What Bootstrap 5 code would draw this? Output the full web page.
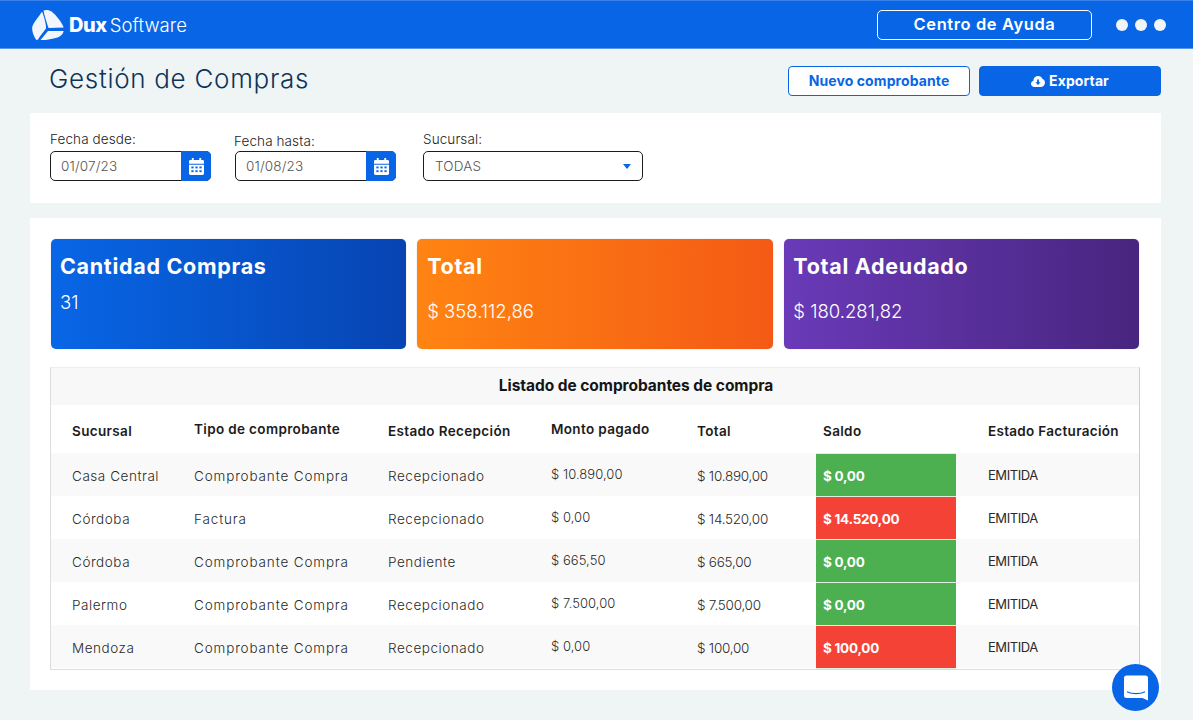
<!DOCTYPE html>
<html lang="es">
<head>
<meta charset="utf-8">
<title>Gestión de Compras</title>
<link href="https://cdn.jsdelivr.net/npm/bootstrap@5.3.0/dist/css/bootstrap.min.css" rel="stylesheet">
<style>
html,body{height:720px;overflow:hidden}
body{background:#eff5f5;font-family:Inter,"Open Sans",sans-serif;color:#1c1c1c;font-size:13.5px}
.topbar{height:49px;background:#0866e6;border-top:1px solid #3a83ea;border-bottom:1px solid #5a97ee;padding:0 27px 0 31px}
.brand{color:#fff;font-size:18.5px;gap:4px;line-height:1}
.brand b{font-weight:800;font-size:20px;letter-spacing:-.5px}
.brand span{font-weight:300;letter-spacing:.05px;margin-left:-2px}
.help-btn{width:215px;height:30px;border:1px solid #fff;border-radius:5px;color:#fff;font-weight:600;font-size:16.5px;letter-spacing:.6px;background:transparent;line-height:1;margin-right:24px;padding:0}
.dots{gap:7px}
.dots i{width:12px;height:12px;border-radius:50%;background:#f2f5f8;display:block}
.title-row{height:64px;padding:0 32px 0 49px}
.page-title{font-size:26px;font-weight:300;color:#0e3358;margin:0 0 4px;letter-spacing:.7px;line-height:1.2}
.btn-new,.btn-exp{height:30px;border-radius:4px;font-size:14px;font-weight:700;padding:0;line-height:1;letter-spacing:.1px}
.btn-new{width:182px;background:#fff;border:1px solid #0866e6;color:#0866e6;margin-right:9px}
.btn-exp{width:182px;background:#0866e6;border:1px solid #0866e6;color:#fff}
.sheet{background:#fff;margin:0 32px 0 30px}
.filters{height:90px;padding:17px 20px 0;margin-bottom:15px}
.fld-lbl{font-size:13.5px;line-height:18px;margin-bottom:3px;display:block;color:#1c1c1c;letter-spacing:.1px;font-weight:300}
.fld-lbl-low{margin-top:2px;margin-bottom:1px;margin-left:-1px}
.field-a{width:161px;margin-right:24px}
.field-b{width:161px;margin-right:27px}
.field-c{width:220px}
.dbox{height:30px;border:1px solid #1c1c1c;border-radius:5px;color:#555;font-size:13.5px;letter-spacing:.15px;font-weight:300;background:#fff}
.dbox>span{flex:1;padding-left:10px}
.dbox>span.sel-val{padding-left:11px}
.cal{width:30px;align-self:stretch;background:#0866e6;margin:-1px -1px -1px 0;border-radius:0 5px 5px 0}
.sel-arrow{width:0;height:0;border:4.5px solid transparent;border-top:5px solid #0866e6;border-bottom:0;margin-right:11px}
.sheet-main{height:472px;padding:21px 22px 0 21px}
.kpi-row{gap:11.5px;margin-bottom:18px}
.kpi{flex:1;height:110px;border-radius:5px;color:#fff;padding:14px 9px;box-shadow:0 0 1px rgba(0,0,0,.35)}
.kpi h5{font-size:21.5px;font-weight:700;margin:0;line-height:26px;letter-spacing:.7px}
.kpi p{margin:0;font-size:18.500px;font-weight:300;line-height:24px}
.kpi-a{background:linear-gradient(90deg,#0866e6 0%,#0744b2 100%)}
.kpi-a p{margin-top:11px}
.kpi-b{background:linear-gradient(90deg,#ff8412 0%,#f45a15 100%);padding-left:10px}
.kpi-c{background:linear-gradient(90deg,#6a3ab8 0%,#48257f 100%)}
.kpi-b p,.kpi-c p{margin-top:20px}
.grid-wrap{border:1px solid #ddd;border-right-color:#ccc;border-top:1px solid #eee;margin:0 0 0 -1px;width:1090px}
.grid-cap{height:37px;background:#f8f8f8;font-weight:700;font-size:15.5px;letter-spacing:-.05px;color:#151515;padding:0 0 2px 82px}
table.buy{table-layout:fixed;width:100%;margin:0;border-collapse:collapse}
table.buy th,table.buy td{padding:0 0 0 21px;vertical-align:middle;font-size:13.5px;white-space:nowrap;color:#2a2a2a;border:0}
table.buy th{height:48px;font-weight:600;color:#1c1c1c;padding-top:4px;letter-spacing:.35px}
table.buy td{height:43px;font-weight:300;letter-spacing:.55px;padding-top:3px}
table.buy td:nth-child(2){letter-spacing:.85px}
table.buy tbody tr:nth-child(odd) td{background:#f9f9f9}
table.buy th.up{padding-top:0}
table.buy td.up{padding-top:0;font-size:13px;letter-spacing:.05px}
table.buy td.tot{letter-spacing:-.25px}
table.buy td.sal{padding-left:7px;color:#fff;font-weight:700;letter-spacing:-.25px;border-top:1px solid #dfeedf;border-bottom:1px solid #dfeedf}
table.buy td.ok,table.buy tbody tr:nth-child(odd) td.ok{background:#4caf50}
table.buy td.bad,table.buy tbody tr:nth-child(odd) td.bad{background:#f44336}
table.buy td.fact{padding-left:32px;font-size:13px;letter-spacing:-.45px;font-weight:400}
table.buy th.fact{padding-left:32px;letter-spacing:.3px}
table.buy th.sal-h{padding-left:7px}
.chat{position:fixed;left:1112px;top:664px;width:47px;height:47px;border-radius:50%;background:#0866e6}
</style>
</head>
<body>
<header class="topbar d-flex align-items-center justify-content-between">
  <div class="brand d-flex align-items-center">
    <svg width="34" height="32" viewBox="0 0 34 32" fill="#f1f5fc" aria-hidden="true"><path d="M10.700 3 C8.500 7 2.500 13.500 1.200 18 C.7 22 3 28 5.500 31 C6.500 31.500 7.500 30 8.500 28 L15 19.500 C15.500 17 13.500 9 11.500 3.500 Z"/><path d="M12.500 1.500 C15 .5 18.500 1 20.500 2.500 C25 6 30 12 32.700 18.500 L17.500 19 C15.500 13 13.500 7 12.500 1.500 Z"/><path d="M9.500 31 L17 22 L32.700 22 C32 25 29.500 27.500 26.500 28.500 C21 30.300 14 31.300 9.500 31 Z"/></svg>
    <div><b>Dux</b> <span>Software</span></div>
  </div>
  <div class="d-flex align-items-center">
    <button class="help-btn" type="button">Centro de Ayuda</button>
    <div class="dots d-flex"><i></i><i></i><i></i></div>
  </div>
</header>

<div class="title-row d-flex align-items-center justify-content-between">
  <h1 class="page-title">Gestión de Compras</h1>
  <div class="d-flex align-items-center">
    <button class="btn-new" type="button">Nuevo comprobante</button>
    <button class="btn-exp d-flex align-items-center justify-content-center gap-1" type="button">
      <svg width="14" height="11" viewBox="0 0 14 11" aria-hidden="true"><path fill="#fff" d="M3.400 11C1.500 11 0 9.600 0 7.800 0 6.300 1 5.100 2.400 4.700 2.500 2.100 4.600 0 7.200 0c1.900 0 3.600 1.100 4.300 2.900C13 3.400 14 4.800 14 6.500 14 9 12 11 9.600 11Z"/><path fill="#0866e6" d="M6.100 3.500h1.800v2.700h1.700L7 9 4.400 6.200h1.700Z"/></svg>
      Exportar
    </button>
  </div>
</div>

<section class="sheet filters d-flex align-items-start">
  <div class="field-a">
    <label class="fld-lbl">Fecha desde:</label>
    <div class="dbox d-flex align-items-center"><span>01/07/23</span>
      <div class="cal d-flex align-items-center justify-content-center"><svg width="15" height="17" viewBox="0 0 16 18" aria-hidden="true"><use href="#calico"/></svg></div>
    </div>
  </div>
  <div class="field-b">
    <label class="fld-lbl fld-lbl-low">Fecha hasta:</label>
    <div class="dbox d-flex align-items-center"><span>01/08/23</span>
      <div class="cal d-flex align-items-center justify-content-center"><svg width="15" height="17" viewBox="0 0 16 18" aria-hidden="true"><use href="#calico"/></svg></div>
    </div>
  </div>
  <div class="field-c">
    <label class="fld-lbl">Sucursal:</label>
    <div class="dbox d-flex align-items-center"><span class="sel-val">TODAS</span><div class="sel-arrow"></div></div>
  </div>
</section>

<svg width="0" height="0" class="d-block" aria-hidden="true"><defs>
  <g id="calico"><path fill="#fff" d="M3 0h2v2h6V0h2v2h1.500A1.500 1.500 0 0 1 16 3.500V6H0V3.500A1.500 1.500 0 0 1 1.500 2H3Z"/><path fill="#fff" d="M0 7h16v9.500A1.500 1.500 0 0 1 14.500 18h-13A1.500 1.500 0 0 1 0 16.500Z"/>
  <g fill="#0866e6"><rect x="2.500" y="9" width="2.400" height="2"/><rect x="6.800" y="9" width="2.400" height="2"/><rect x="11.100" y="9" width="2.400" height="2"/><rect x="2.500" y="13" width="2.400" height="2"/><rect x="6.800" y="13" width="2.400" height="2"/><rect x="11.100" y="13" width="2.400" height="2"/></g></g>
</defs></svg>

<section class="sheet sheet-main">
  <div class="kpi-row d-flex">
    <div class="kpi kpi-a"><h5>Cantidad Compras</h5><p>31</p></div>
    <div class="kpi kpi-b"><h5>Total</h5><p>$ 358.112,86</p></div>
    <div class="kpi kpi-c"><h5>Total Adeudado</h5><p>$ 180.281,82</p></div>
  </div>
  <div class="grid-wrap">
    <div class="grid-cap d-flex align-items-center justify-content-center">Listado de comprobantes de compra</div>
    <table class="buy">
      <colgroup><col style="width:122px"><col style="width:194px"><col style="width:163px"><col style="width:146px"><col style="width:140px"><col style="width:140px"><col></colgroup>
      <thead><tr>
        <th>Sucursal</th><th class="up">Tipo de comprobante</th><th>Estado Recepción</th><th class="up">Monto pagado</th><th>Total</th><th class="sal-h">Saldo</th><th class="fact">Estado Facturación</th>
      </tr></thead>
      <tbody>
        <tr><td>Casa Central</td><td>Comprobante Compra</td><td>Recepcionado</td><td class="up">$ 10.890,00</td><td class="tot">$ 10.890,00</td><td class="sal ok">$ 0,00</td><td class="fact">EMITIDA</td></tr>
        <tr><td>Córdoba</td><td>Factura</td><td>Recepcionado</td><td class="up">$ 0,00</td><td class="tot">$ 14.520,00</td><td class="sal bad">$ 14.520,00</td><td class="fact">EMITIDA</td></tr>
        <tr><td>Córdoba</td><td>Comprobante Compra</td><td>Pendiente</td><td class="up">$ 665,50</td><td class="tot">$ 665,00</td><td class="sal ok">$ 0,00</td><td class="fact">EMITIDA</td></tr>
        <tr><td>Palermo</td><td>Comprobante Compra</td><td>Recepcionado</td><td class="up">$ 7.500,00</td><td class="tot">$ 7.500,00</td><td class="sal ok">$ 0,00</td><td class="fact">EMITIDA</td></tr>
        <tr><td>Mendoza</td><td>Comprobante Compra</td><td>Recepcionado</td><td class="up">$ 0,00</td><td class="tot">$ 100,00</td><td class="sal bad">$ 100,00</td><td class="fact">EMITIDA</td></tr>
      </tbody>
    </table>
  </div>
</section>

<div class="chat d-flex align-items-center justify-content-center">
  <svg width="26" height="28" viewBox="0 0 26 27" aria-hidden="true"><path fill="#fff" d="M3.500 1h19A2.500 2.500 0 0 1 25 3.500V26l-5.500-2.500h-16A2.500 2.500 0 0 1 1 21V3.500A2.500 2.500 0 0 1 3.500 1Z"/><path fill="none" stroke="#0866e6" stroke-width="1.300" stroke-linecap="round" d="M4.500 17.500c4.500 2.200 12.500 2.200 17 0"/></svg>
</div>
</body>
</html>
